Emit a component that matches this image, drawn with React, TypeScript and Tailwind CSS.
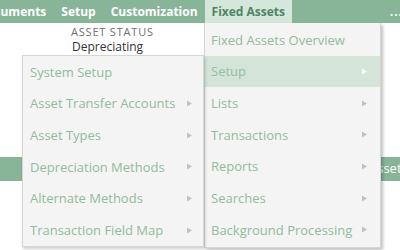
import React from "react";

const Arrow = ({ white }: { white?: boolean }) => (
  <svg width="5" height="7" viewBox="0 0 5 7" className="shrink-0">
    <path d="M0 0.5 L5 3.5 L0 6.5 Z" fill={white ? "#ffffff" : "#c2c2c2"} />
  </svg>
);

const mainItems = [
  { label: "Fixed Assets Overview", arrow: false },
  { label: "Setup", arrow: true, active: true },
  { label: "Lists", arrow: true },
  { label: "Transactions", arrow: true },
  { label: "Reports", arrow: true },
  { label: "Searches", arrow: true },
  { label: "Background Processing", arrow: true },
];

const subItems = [
  { label: "System Setup", arrow: false },
  { label: "Asset Transfer Accounts", arrow: true },
  { label: "Asset Types", arrow: true },
  { label: "Depreciation Methods", arrow: true },
  { label: "Alternate Methods", arrow: true },
  { label: "Transaction Field Map", arrow: true },
];

export default function App() {
  return (
    <div
      className="relative w-[400px] h-[250px] overflow-hidden bg-white"
      style={{ fontFamily: '"Open Sans", "Liberation Sans", sans-serif' }}
    >
      {/* nav bar */}
      <div className="h-[23px] bg-[#88b598] flex items-stretch text-[12px] font-bold text-white whitespace-nowrap">
        <div className="flex items-center -ml-[22px]">Documents</div>
        <div className="flex items-center ml-[15px]">Setup</div>
        <div className="flex items-center ml-[15px]">Customization</div>
        <div className="flex items-center ml-[7px] bg-[#d5e6da] text-[#4e8462] pl-[7px] w-[87px]">Fixed Assets</div>
        <div className="flex-1" />
        <div className="flex items-center -mr-[3px] tracking-[1px]">...</div>
      </div>

      {/* page content */}
      <div className="pl-[71px] pt-[2px]">
        <div className="text-[11px] tracking-[0.8px] text-[#6f6f6f] leading-[14px]">ASSET STATUS</div>
        <div className="text-[12px] text-[#333] leading-[15px] pl-[1px]">Depreciating</div>
      </div>
      <div className="mt-[103px] h-[24px] bg-[#88b598] flex items-center text-[13px] text-white whitespace-nowrap">
        <div className="w-[6px] flex justify-end overflow-hidden">
          <span>Methods</span>
        </div>
        <span className="ml-[369px]">Assets</span>
      </div>

      {/* main dropdown */}
      <div className="absolute left-[204px] top-[23px] w-[177px] bg-[#f4f4f4] border border-[#d6d6d6] border-t-0 shadow-[2px_2px_3px_rgba(0,0,0,0.25)] pt-[1px] pb-[1px]">
        {mainItems.map((it) => (
          <div
            key={it.label}
            className={`h-[31.67px] flex items-center pl-[6px] pr-[13px] text-[13px] whitespace-nowrap ${
              it.active ? "bg-[#d4e4d8] text-[#93bfa0]" : "text-[#8fbd9d]"
            }`}
          >
            <span className="flex-1 pt-[1px]">{it.label}</span>
            {it.arrow && <Arrow white={it.active} />}
          </div>
        ))}
      </div>

      {/* sub dropdown */}
      <div className="absolute left-[22px] top-[55px] w-[182px] bg-[#f4f4f4] border border-[#d6d6d6] shadow-[1px_2px_3px_rgba(0,0,0,0.2)]">
        {subItems.map((it) => (
          <div
            key={it.label}
            className="h-[31.67px] flex items-center pl-[7px] pr-[11px] text-[13px] text-[#8fbd9d] whitespace-nowrap"
          >
            <span className="flex-1 pt-[1px]">{it.label}</span>
            {it.arrow && <Arrow />}
          </div>
        ))}
      </div>
    </div>
  );
}
